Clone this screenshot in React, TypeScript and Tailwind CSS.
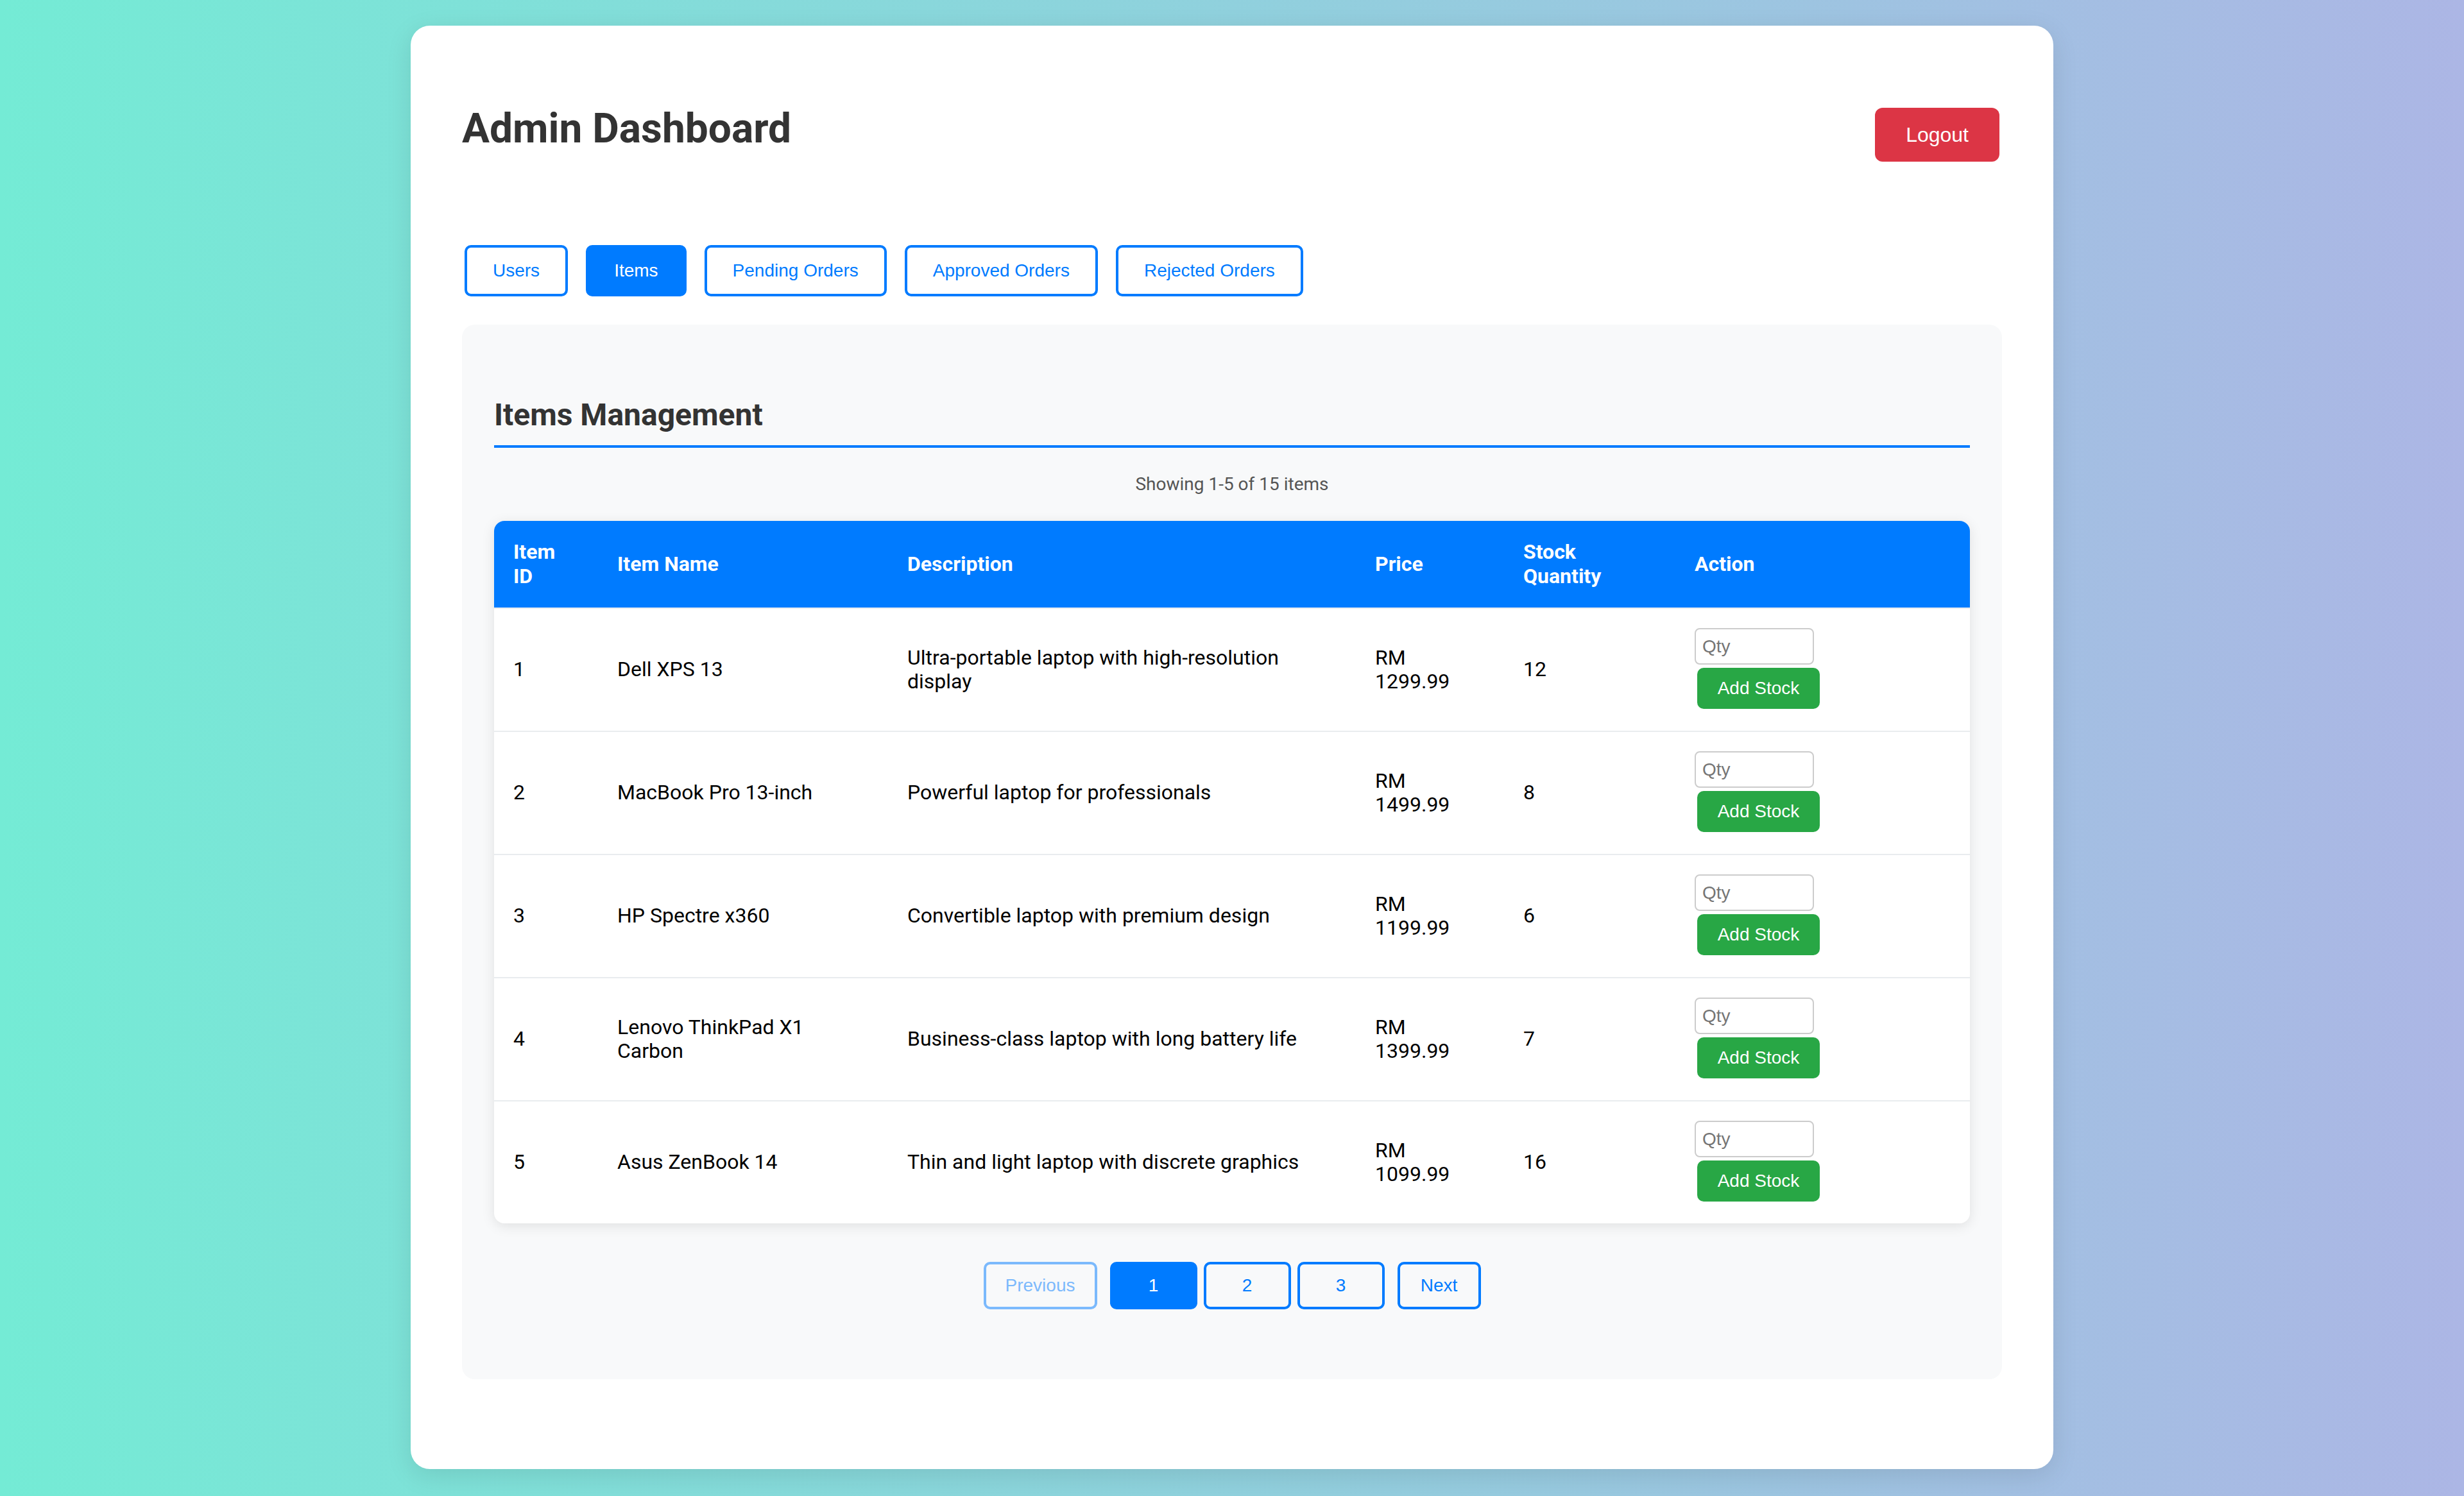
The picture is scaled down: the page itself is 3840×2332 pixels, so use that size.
import React from "react";

type Item = {
  id: number;
  name: string[];
  desc: string[];
  price: string;
  stock: number;
};

const items: Item[] = [
  { id: 1, name: ["Dell XPS 13"], desc: ["Ultra-portable laptop with high-resolution", "display"], price: "1299.99", stock: 12 },
  { id: 2, name: ["MacBook Pro 13-inch"], desc: ["Powerful laptop for professionals"], price: "1499.99", stock: 8 },
  { id: 3, name: ["HP Spectre x360"], desc: ["Convertible laptop with premium design"], price: "1199.99", stock: 6 },
  { id: 4, name: ["Lenovo ThinkPad X1", "Carbon"], desc: ["Business-class laptop with long battery life"], price: "1399.99", stock: 7 },
  { id: 5, name: ["Asus ZenBook 14"], desc: ["Thin and light laptop with discrete graphics"], price: "1099.99", stock: 16 },
];

function Lines({ lines }: { lines: string[] }) {
  return (
    <>
      {lines.map((l, i) => (
        <React.Fragment key={i}>
          {i > 0 && <br />}
          {l}
        </React.Fragment>
      ))}
    </>
  );
}

const tabs = ["Users", "Items", "Pending Orders", "Approved Orders", "Rejected Orders"];

export default function App() {
  return (
    <div className="min-h-screen w-full bg-[linear-gradient(to_right,#74ebd5,#acb6e5)] py-[40px] font-['Roboto',sans-serif]">
      <div className="mx-auto w-[2560px] rounded-[30px] bg-white px-[80px] pt-[80px] pb-[140px] shadow-[0_10px_40px_rgba(0,0,0,0.1)]">
        {/* Header */}
        <div className="flex h-[262px] items-start justify-between">
          <h1 className="mt-[43px] text-[64px] font-bold leading-[75px] text-[#333]">Admin Dashboard</h1>
          <button className="mt-[48px] mr-[4px] flex h-[84px] items-center rounded-[12px] bg-[#dc3545] px-[48px] font-['Liberation_Sans',Arial,sans-serif] text-[32px] leading-[37px] text-white">
            Logout
          </button>
        </div>

        {/* Tabs */}
        <div className="flex h-[80px] gap-[28px] pl-[4px]">
          {tabs.map((t) => {
            const active = t === "Items";
            return (
              <button
                key={t}
                className={
                  active
                    ? "flex h-[80px] items-center rounded-[10px] border-[4px] border-[#007bff] bg-[#007bff] px-[40px] font-['Liberation_Sans',Arial,sans-serif] text-[28px] leading-[32px] text-white"
                    : "flex h-[80px] items-center rounded-[10px] border-[4px] border-[#007bff] bg-white px-[40px] font-['Liberation_Sans',Arial,sans-serif] text-[28px] leading-[32px] text-[#007bff]"
                }
              >
                {t}
              </button>
            );
          })}
        </div>

        {/* Panel */}
        <div className="mt-[44px] rounded-[20px] bg-[#f8f9fa] px-[50px] pt-[113px] pb-[109px]">
          <h2 className="border-b-[4px] border-[#007bff] pb-[19px] text-[48px] font-bold leading-[56px] text-[#333]">
            Items Management
          </h2>
          <p className="mt-[40px] text-center text-[28px] leading-[33px] text-[#555]">Showing 1-5 of 15 items</p>

          <div className="mt-[41px] overflow-hidden rounded-[16px] bg-white shadow-[0_4px_20px_rgba(0,0,0,0.1)]">
            <table className="w-full table-fixed border-collapse">
              <colgroup>
                <col className="w-[162px]" />
                <col className="w-[452px]" />
                <col className="w-[729px]" />
                <col className="w-[231px]" />
                <col className="w-[267px]" />
                <col className="w-[459px]" />
              </colgroup>
              <thead>
                <tr>
                  {[["Item", "ID"], ["Item Name"], ["Description"], ["Price"], ["Stock", "Quantity"], ["Action"]].map((h, i) => (
                    <th
                      key={i}
                      className="border-b-[2px] border-[#e9ecef] bg-[#007bff] px-[30px] py-[30px] text-left align-middle text-[32px] font-bold leading-[37.5px] text-white"
                    >
                      <Lines lines={h} />
                    </th>
                  ))}
                </tr>
              </thead>
              <tbody>
                {items.map((it, idx) => {
                  const last = idx === items.length - 1;
                  const cell = last
                    ? "px-[30px] align-middle text-[32px] leading-[37.5px] text-[#000]"
                    : "border-b-[2px] border-[#e9ecef] px-[30px] align-middle text-[32px] leading-[37.5px] text-[#000]";
                  return (
                    <tr key={it.id}>
                      <td className={cell}>{it.id}</td>
                      <td className={cell}>
                        <Lines lines={it.name} />
                      </td>
                      <td className={cell}>
                        <Lines lines={it.desc} />
                      </td>
                      <td className={cell}>
                        RM
                        <br />
                        {it.price}
                      </td>
                      <td className={cell}>{it.stock}</td>
                      <td className={cell}>
                        <div className="flex flex-col items-start pt-[30px] pb-[34px]">
                          <input
                            type="number"
                            placeholder="Qty"
                            className="h-[57px] w-[186px] rounded-[8px] border-[2px] border-[#ccc] bg-white px-[10px] font-['Liberation_Sans',Arial,sans-serif] text-[28px] text-[#000] outline-none placeholder:text-[#757575]"
                          />
                          <button className="mt-[5px] ml-[4px] flex h-[64px] w-[191px] items-center justify-center rounded-[10px] bg-[#28a745] font-['Liberation_Sans',Arial,sans-serif] text-[28px] leading-[32px] text-white">
                            Add Stock
                          </button>
                        </div>
                      </td>
                    </tr>
                  );
                })}
              </tbody>
            </table>
          </div>

          {/* Pagination */}
          <div className="mt-[60px] flex h-[74px] items-center justify-center gap-[20px]">
            <button className="flex h-[74px] w-[177px] items-center justify-center rounded-[10px] border-[4px] border-[#007bff] font-['Liberation_Sans',Arial,sans-serif] text-[28px] leading-[32px] text-[#007bff] opacity-50">
              Previous
            </button>
            <div className="flex gap-[10px]">
              <button className="flex h-[74px] w-[136px] items-center justify-center rounded-[10px] border-[4px] border-[#007bff] bg-[#007bff] font-['Liberation_Sans',Arial,sans-serif] text-[28px] leading-[32px] text-white">
                1
              </button>
              <button className="flex h-[74px] w-[136px] items-center justify-center rounded-[10px] border-[4px] border-[#007bff] font-['Liberation_Sans',Arial,sans-serif] text-[28px] leading-[32px] text-[#007bff]">
                2
              </button>
              <button className="flex h-[74px] w-[136px] items-center justify-center rounded-[10px] border-[4px] border-[#007bff] font-['Liberation_Sans',Arial,sans-serif] text-[28px] leading-[32px] text-[#007bff]">
                3
              </button>
            </div>
            <button className="flex h-[74px] w-[130px] items-center justify-center rounded-[10px] border-[4px] border-[#007bff] font-['Liberation_Sans',Arial,sans-serif] text-[28px] leading-[32px] text-[#007bff]">
              Next
            </button>
          </div>
        </div>
      </div>
    </div>
  );
}
